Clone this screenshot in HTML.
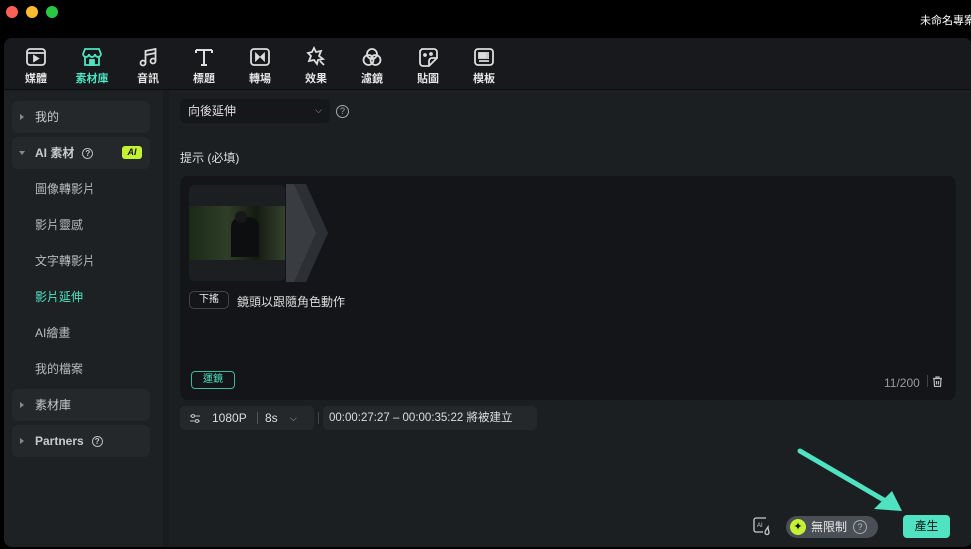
<!DOCTYPE html>
<html><head><meta charset="utf-8"><style>
*{margin:0;padding:0;box-sizing:border-box}
body{width:971px;height:549px;background:#000;font-family:"Liberation Sans","Noto Sans CJK TC",sans-serif;color:#d8dadc;position:relative;overflow:hidden;font-size:12px}
.dot{position:absolute;top:6px;width:12px;height:12px;border-radius:50%}
.app{position:absolute;left:4px;top:38px;width:968px;height:509px;background:#1c1f22;border-radius:8px;overflow:hidden}
.tb{position:absolute;left:0;top:0;right:0;height:52px;background:#17191c;border-bottom:1px solid #0c0d0f}
.ti{position:absolute;top:8px;width:40px;text-align:center;font-size:11px;color:#e6e6e6;font-weight:bold}
.ti svg{display:block;margin:0 auto 2px}
.side{position:absolute;left:0;top:53px;width:159px;bottom:0;background:#1e2124}
.strip{position:absolute;left:159px;top:53px;width:6px;bottom:0;background:#191b1e}
.sg{position:absolute;left:8px;width:138px;height:32px;background:#25282b;border-radius:6px;font-size:12px;color:#c8cacc;line-height:32px;padding-left:23px}
.sg:before{content:"";position:absolute;left:8px;top:13px;border-left:4px solid #888;border-top:3px solid transparent;border-bottom:3px solid transparent}
.sg.open:before{border-top:4px solid #888;border-left:3px solid transparent;border-right:3px solid transparent;border-bottom:0;top:14px;left:7px}
.si{position:absolute;left:31px;font-size:12px;color:#b8babc}
.q{display:inline-block;width:11px;height:11px;border:1px solid #bbb;border-radius:50%;font-size:8px;line-height:9px;text-align:center;vertical-align:1px;margin-left:8px}
</style></head><body>
<div class="dot" style="left:6px;background:#fe5f57"></div>
<div class="dot" style="left:26px;background:#febc2e"></div>
<div class="dot" style="left:46px;background:#28c840"></div>
<div style="position:absolute;left:920px;top:12px;font-size:11px;color:#fff;white-space:nowrap">未命名專案</div>
<div class="app">
 <div class="tb">
  <div class="ti" style="left:12px"><svg width="22" height="22" viewBox="0 0 22 22" fill="none" stroke="#ddd" stroke-width="1.8"><rect x="2" y="3" width="18" height="16" rx="3"/><path d="M2 7h18"/><path d="M9 10l4 2.5-4 2.5z" fill="#ddd"/></svg>媒體</div>
  <div class="ti" style="left:67px;color:#4fe3c1;width:42px"><svg width="22" height="22" viewBox="0 0 22 22" fill="none" stroke="#4fe3c1" stroke-width="1.8"><path d="M4 3h14l2 5c0 2-2 3-3 3s-3-1-3-3c0 2-2 3-3 3s-3-1-3-3c0 2-2 3-3 3s-3-1-3-3z"/><path d="M4 11v8h14v-8"/><rect x="9" y="14" width="4" height="5" fill="#4fe3c1"/></svg>素材庫</div>
  <div class="ti" style="left:124px"><svg width="22" height="22" viewBox="0 0 22 22" fill="none" stroke="#ddd" stroke-width="1.8"><circle cx="6" cy="17" r="2.5"/><circle cx="16" cy="15" r="2.5"/><path d="M8.5 17V5l10-2v12M8.5 9l10-2"/></svg>音訊</div>
  <div class="ti" style="left:180px"><svg width="22" height="22" viewBox="0 0 22 22" fill="none" stroke="#ddd" stroke-width="2"><path d="M3 4h16M3 4v3M19 4v3M11 4v15M8 19h6"/></svg>標題</div>
  <div class="ti" style="left:236px"><svg width="22" height="22" viewBox="0 0 22 22" fill="none" stroke="#ddd" stroke-width="1.8"><rect x="2" y="3" width="18" height="16" rx="3"/><path d="M7 8l3 3-3 3zM15 8l-3 3 3 3z" fill="#ddd"/></svg>轉場</div>
  <div class="ti" style="left:292px"><svg width="22" height="22" viewBox="0 0 22 22" fill="none" stroke="#ddd" stroke-width="1.8"><path d="M9 2l2 4 5-1-2 5 4 3-5 1-1 4-3-4-5 1 2-5-3-3 4-1z"/><path d="M15 15l4 4"/></svg>效果</div>
  <div class="ti" style="left:348px"><svg width="22" height="22" viewBox="0 0 22 22" fill="none" stroke="#ddd" stroke-width="1.8"><circle cx="11" cy="8" r="5"/><circle cx="7.5" cy="14" r="5"/><circle cx="14.5" cy="14" r="5"/></svg>濾鏡</div>
  <div class="ti" style="left:404px"><svg width="22" height="22" viewBox="0 0 22 22" fill="none" stroke="#ddd" stroke-width="1.8"><path d="M5 3h12a3 3 0 013 3v6l-8 8H6a3 3 0 01-3-3V5z"/><path d="M12 20v-5a3 3 0 013-3h5"/><circle cx="8" cy="9" r="1" fill="#ddd"/><circle cx="14" cy="8" r="1" fill="#ddd"/></svg>貼圖</div>
  <div class="ti" style="left:460px"><svg width="22" height="22" viewBox="0 0 22 22" fill="none" stroke="#ddd" stroke-width="1.8"><rect x="2" y="3" width="18" height="16" rx="3"/><rect x="6" y="7" width="7" height="5" fill="#ddd"/><path d="M15 6v7M6 15h10"/></svg>模板</div>
 </div>
 <div class="side">
  <div class="sg" style="top:10px">我的</div>
  <div class="sg open" style="top:46px;font-weight:bold">AI 素材<span class="q">?</span><span style="position:absolute;left:110px;top:9px;width:20px;height:13px;background:#c5f135;border-radius:3px;color:#111;font-size:9px;line-height:13px;text-align:center;font-style:italic;font-weight:bold">AI</span></div>
  <div class="si" style="top:89px">圖像轉影片</div>
  <div class="si" style="top:125px">影片靈感</div>
  <div class="si" style="top:161px">文字轉影片</div>
  <div class="si" style="top:197px;color:#4fe3c1">影片延伸</div>
  <div class="si" style="top:233px">AI繪畫</div>
  <div class="si" style="top:269px">我的檔案</div>
  <div class="sg" style="top:298px">素材庫</div>
  <div class="sg" style="top:334px;font-weight:bold">Partners<span class="q">?</span></div>
 </div>
 <div class="strip"></div>
 <div style="position:absolute;left:176px;top:61px;width:150px;height:24px;background:#15171a;border-radius:5px;font-size:12px;line-height:24px;padding-left:8px;color:#ddd">向後延伸<span style="position:absolute;right:8px;top:-1px;font-size:9px;color:#aaa">⌵</span></div>
 <div style="position:absolute;left:332px;top:67px;width:13px;height:13px;border:1px solid #aaa;border-radius:50%;font-size:9px;line-height:11px;text-align:center;color:#aaa">?</div>
 <div style="position:absolute;left:176px;top:111px;font-size:12px;color:#ddd">提示 (必填)</div>
 <div style="position:absolute;left:176px;top:138px;width:776px;height:224px;background:#131518;border-radius:8px">
  <div style="position:absolute;left:9px;top:9px;width:96px;height:96px;background:#1c1f22;border-radius:5px;overflow:hidden">
   <div style="position:absolute;left:0;top:21px;width:96px;height:54px;background:linear-gradient(90deg,#1b2a17,#2f3e28 40%,#151a12 70%,#33422c)"></div>
   <div style="position:absolute;left:42px;top:32px;width:28px;height:40px;background:#0d0e0f;border-radius:10px 10px 0 0"></div>
   <div style="position:absolute;left:46px;top:26px;width:12px;height:12px;background:#181818;border-radius:50%"></div>
  </div>
  <svg style="position:absolute;left:106px;top:8px" width="42" height="98" viewBox="0 0 42 98"><path d="M0 0h20l22 49-22 49H0z" fill="#2c2f33"/><path d="M0 0h8l22 49-22 49H0z" fill="#393c40"/></svg>
  <div style="position:absolute;left:9px;top:115px;width:40px;height:18px;border:1px solid #444;border-radius:5px;font-size:10px;text-align:center;line-height:16px;color:#eee">下搖</div>
  <div style="position:absolute;left:57px;top:117px;font-size:12px;color:#ddd">鏡頭以跟隨角色動作</div>
  <div style="position:absolute;left:11px;top:195px;width:44px;height:18px;border:1.5px solid #3fb99c;border-radius:4px;font-size:10px;text-align:center;line-height:15px;color:#4fe3c1">運鏡</div>
  <div style="position:absolute;left:704px;top:200px;font-size:12px;color:#999">11/200</div>
  <div style="position:absolute;left:747px;top:199px;width:1px;height:12px;background:#444"></div>
  <svg style="position:absolute;left:752px;top:200px" width="11" height="11" viewBox="0 0 11 11" fill="none" stroke="#bbb" stroke-width="1.2"><path d="M1 2.5h9M4 2.5V1h3v1.5M2 2.5l.5 8h6l.5-8M4.5 5v3.5M6.5 5v3.5"/></svg>
 </div>
 <div style="position:absolute;left:176px;top:368px;width:134px;height:24px;background:#25282b;border-radius:5px;font-size:12px;line-height:24px;color:#ddd">
  <svg style="position:absolute;left:10px;top:8px" width="10" height="9" viewBox="0 0 10 9" fill="none" stroke="#bbb" stroke-width="1"><path d="M0 2h10M0 7h10"/><circle cx="3" cy="2" r="1.5" fill="#25282b"/><circle cx="7" cy="7" r="1.5" fill="#25282b"/></svg>
  <span style="position:absolute;left:32px">1080P</span><span style="position:absolute;left:77px;top:6px;width:1px;height:12px;background:#555"></span><span style="position:absolute;left:85px">8s</span><span style="position:absolute;left:110px;font-size:9px;color:#aaa">⌵</span></div>
 <div style="position:absolute;left:314px;top:374px;width:1px;height:12px;background:#444"></div>
 <div style="position:absolute;left:319px;top:368px;width:214px;height:24px;background:#25282b;border-radius:5px;font-size:11.5px;line-height:24px;padding-left:6px;color:#ddd;white-space:nowrap">00:00:27:27 – 00:00:35:22 將被建立</div>
 <svg style="position:absolute;left:790px;top:405px" width="110" height="70" viewBox="0 0 110 70"><path d="M6 8L95 60" stroke="#4fe3c1" stroke-width="5" stroke-linecap="round"/><path d="M108 68L80 66l18-18z" fill="#4fe3c1"/></svg>
 <svg style="position:absolute;left:749px;top:479px" width="20" height="19" viewBox="0 0 20 19" fill="none" stroke="#ccc" stroke-width="1.3"><path d="M13 1H3a2 2 0 00-2 2v10a2 2 0 002 2h7"/><path d="M15 10c-2 3-3 4-3 5.5a2 2 0 004 0c0-1.5-1-2.5-1-5.5z"/><text x="4" y="10" font-size="6" fill="#ccc" stroke="none" font-family="Liberation Sans">AI</text></svg>
 <div style="position:absolute;left:782px;top:478px;width:92px;height:22px;background:#4a4f55;border-radius:11px;font-size:12px;line-height:22px;padding-left:25px;color:#e8e8e8">
  <span style="position:absolute;left:4px;top:3px;width:16px;height:16px;border-radius:50%;background:#c5f135;color:#111;font-size:11px;line-height:16px;text-align:center">✦</span>無限制<span style="position:absolute;left:67px;top:4px;width:14px;height:14px;border:1px solid #aaa;border-radius:50%;font-size:9px;line-height:12px;text-align:center;color:#bbb">?</span></div>
 <div style="position:absolute;left:899px;top:477px;width:47px;height:23px;background:#4fe3c1;border-radius:4px;font-size:12px;line-height:23px;text-align:center;color:#1a1a1a">產生</div>
</div>
</body></html>
